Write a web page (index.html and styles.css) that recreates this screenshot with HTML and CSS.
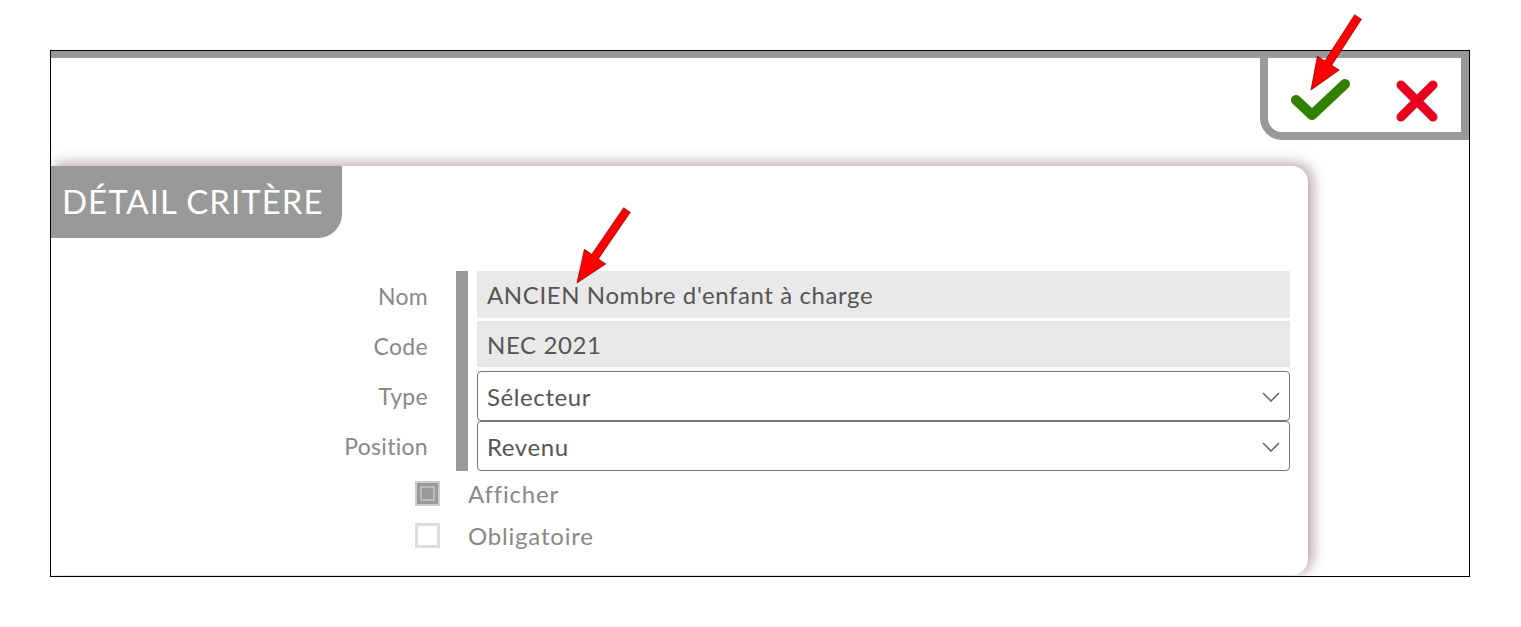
FILE: index.html
```html
<!DOCTYPE html>
<html lang="fr">
<head>
  <meta charset="UTF-8" />
  <title>Détail critère</title>
  <meta name="viewport" content="width=device-width, initial-scale=1" />
  <link rel="stylesheet" href="styles.css">
</head>
<body>

  <div class="frame">
    <div class="topbar"></div>

    <div class="actions">
      <button class="icon-btn ok" title="Valider">
        <svg width="60" height="46" viewBox="0 0 60 46">
          <path d="M6 23 L22 38 L55 7" fill="none" stroke="#338000" stroke-width="10" stroke-linecap="round" stroke-linejoin="round"/>
        </svg>
      </button>
      <button class="icon-btn cancel" title="Annuler">
        <svg width="44" height="44" viewBox="0 0 44 44">
          <path d="M6 6 L38 38 M38 6 L6 38" fill="none" stroke="#e8001e" stroke-width="9" stroke-linecap="round"/>
        </svg>
      </button>
    </div>

    <section class="card">
      <h2 class="tab">DÉTAIL CRITÈRE</h2>

      <div class="form">
        <label class="lbl r1">Nom</label>
        <label class="lbl r2">Code</label>
        <label class="lbl r3">Type</label>
        <label class="lbl r4">Position</label>
        <div class="bar"></div>
        <div class="field readonly r1 nom">ANCIEN Nombre d'enfant à charge</div>
        <div class="field readonly r2 code">NEC 2021</div>
        <div class="field select r3">Sélecteur
          <svg class="chev" width="18" height="10" viewBox="0 0 18 10"><path d="M1 1 L9 9 L17 1" fill="none" stroke="#666" stroke-width="1.6"/></svg>
        </div>
        <div class="field select r4">Revenu
          <svg class="chev" width="18" height="10" viewBox="0 0 18 10"><path d="M1 1 L9 9 L17 1" fill="none" stroke="#666" stroke-width="1.6"/></svg>
        </div>
      </div>

      <div class="checks">
        <div class="check-row"><span class="box checked"></span>Afficher</div>
        <div class="check-row"><span class="box"></span>Obligatoire</div>
      </div>
    </section>
  </div>

  <!-- annotation arrows -->
  <svg class="notes" width="1521" height="627" viewBox="0 0 1521 627">
    <polygon points="1361.4,19.2 1331.7,65.3 1339.2,70.1 1311,90 1317.4,56.1 1324.9,60.9 1354.6,14.8" />
    <polygon points="630.3,212.3 598.4,258.9 605.8,263.9 577,283 584.4,249.3 591.8,254.3 623.7,207.7" />
  </svg>

</body>
</html>
```

FILE: styles.css
```css
body {
  margin: 0;
  padding: 50px 51px 0 50px;
  background: #fff;
  font-family: Lato, "Open Sans", sans-serif;
  color: #555;
}

.frame {
  border: 1px solid #000;
  height: 525px;
  overflow: hidden;
  background: #fff;
}

.topbar {
  height: 7px;
  background: #999;
}

.actions {
  margin-left: auto;
  width: 209px;
  height: 82px;
  box-sizing: border-box;
  border: 8px solid #999;
  border-top: none;
  border-bottom-left-radius: 22px;
  display: flex;
  align-items: flex-start;
  padding: 19px 0 0 22px;
  gap: 45px;
}

.icon-btn {
  border: none;
  background: none;
  padding: 0;
  cursor: pointer;
  line-height: 0;
}

.icon-btn.cancel {
  margin-top: 2px;
}

.card {
  margin-top: 26px;
  width: 1257px;
  height: 409px;
  background: #fff;
  border-radius: 0 16px 16px 0;
  box-shadow: 4px -2px 14px rgba(100, 65, 65, 0.5);
  position: relative;
}

.tab {
  margin: 0;
  width: 291px;
  height: 72px;
  box-sizing: border-box;
  padding-left: 11px;
  background: #999;
  color: #fff;
  font-weight: normal;
  font-size: 33px;
  letter-spacing: 1px;
  line-height: 70px;
  border-bottom-right-radius: 24px;
}

.form {
  display: grid;
  grid-template-columns: 405px 21px 813px;
  margin-top: 33px;
}

.form .bar {
  grid-column: 2;
  grid-row: 1 / 5;
  width: 12px;
  background: #999;
}

.lbl {
  grid-column: 1;
  padding-right: 28px;
  color: #888;
  font-size: 23px;
  letter-spacing: 0.3px;
  display: flex;
  align-items: center;
  justify-content: flex-end;
}

.r1 { grid-row: 1; }
.r2 { grid-row: 2; }
.r3 { grid-row: 3; }
.r4 { grid-row: 4; }

.field {
  grid-column: 3;
  box-sizing: border-box;
  font-size: 24px;
  letter-spacing: 0.6px;
  color: #555;
  padding-left: 10px;
  display: flex;
  align-items: center;
  position: relative;
}

.field.readonly {
  background: #e9e9e9;
}

.field.nom {
  height: 47px;
  margin-bottom: 3px;
}

.field.code {
  height: 46px;
  margin-bottom: 4px;
}

.field.select {
  height: 50px;
  border: 1px solid #777;
  border-radius: 4px;
  padding-left: 9px;
}

.chev {
  position: absolute;
  right: 9px;
  top: 20px;
}

.checks {
  margin: 10px 0 0 364px;
}

.check-row {
  display: flex;
  align-items: center;
  height: 25px;
  margin-bottom: 17px;
  font-size: 24px;
  letter-spacing: 0.8px;
  color: #888;
}

.box {
  width: 25px;
  height: 25px;
  box-sizing: border-box;
  border: 3px solid #ddd;
  background: #fff;
  margin-right: 28px;
  position: relative;
}

.box.checked {
  border: 2px solid #ccc;
  background: #999;
}

.box.checked::after {
  content: "";
  position: absolute;
  inset: 3px;
  border: 2px solid #bbb;
  background: #999;
}

.notes {
  position: absolute;
  top: 0;
  left: 0;
  pointer-events: none;
}

.notes polygon {
  fill: #ff0000;
  stroke: #700;
  stroke-width: 0.7;
}
```
